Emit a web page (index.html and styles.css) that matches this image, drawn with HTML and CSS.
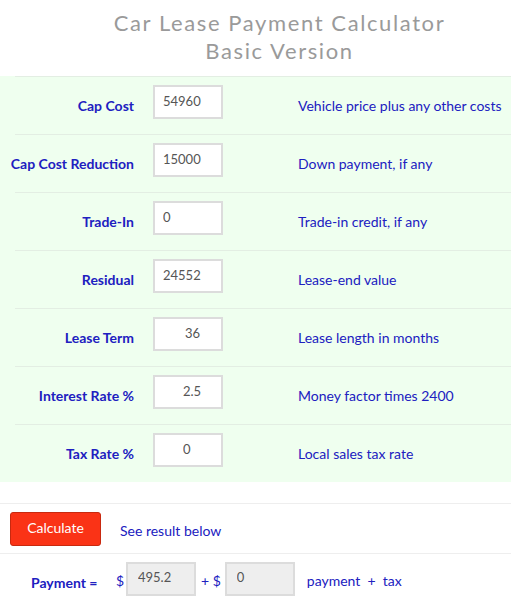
FILE: index.html
```html
<!DOCTYPE HTML>
<html>
<head>
<meta http-equiv="Content-Type" content="text/html; charset=utf-8">
<title>Car Lease Payment Calculator</title>
<link rel="stylesheet" href="styles.css">
</head>
<body>
	<h1 class="title">Car Lease Payment Calculator<br>Basic Version</h1>
	<div class="form">
		<div class="row">
			<label class="lab">Cap Cost</label>
			<input class="box" type="text" value="54960">
			<span class="desc">Vehicle price plus any other costs</span>
		</div>
		<div class="row">
			<label class="lab">Cap Cost Reduction</label>
			<input class="box" type="text" value="15000">
			<span class="desc">Down payment, if any</span>
		</div>
		<div class="row">
			<label class="lab">Trade-In</label>
			<input class="box" type="text" value="0">
			<span class="desc">Trade-in credit, if any</span>
		</div>
		<div class="row">
			<label class="lab">Residual</label>
			<input class="box" type="text" value="24552">
			<span class="desc">Lease-end value</span>
		</div>
		<div class="row">
			<label class="lab">Lease Term</label>
			<input class="box far" type="text" value="36">
			<span class="desc">Lease length in months</span>
		</div>
		<div class="row">
			<label class="lab">Interest Rate %</label>
			<input class="box mid" type="text" value="2.5">
			<span class="desc">Money factor times 2400</span>
		</div>
		<div class="row">
			<label class="lab">Tax Rate %</label>
			<input class="box mid" type="text" value="0">
			<span class="desc">Local sales tax rate</span>
		</div>
	</div>
	<div class="calc">
		<button class="btn" type="button">Calculate</button>
		<span class="hint">See result below</span>
	</div>
	<div class="result">
		<span class="paylab">Payment =</span>
		<span class="dollar">$</span>
		<input class="box out" type="text" value="495.2" readonly>
		<span class="plus">+ $</span>
		<input class="box out" type="text" value="0" readonly>
		<span class="note">payment&nbsp; +&nbsp; tax</span>
	</div>
</body>
</html>
```

FILE: styles.css
```css
/* 页面基础 */
body {
	margin: 0;
	font-family: Lato, "Open Sans", sans-serif;
	color: #2020c0;
	background: #fff;
}

.title {
	margin: 0;
	padding: 9px 0 11px 48px;
	font-size: 22px;
	line-height: 28px;
	font-weight: normal;
	letter-spacing: 1.6px;
	color: #9a9a9a;
	text-align: center;
}

/* 输入区 绿色背景 */
.form {
	background: #efffef;
}

.row {
	display: flex;
	align-items: center;
	height: 57px;
	margin-left: 15px;
	border-top: 1px solid #e3eee3;
	font-size: 14px;
}

.lab {
	margin-left: -15px;
	width: 134px;
	display: flex;
	justify-content: flex-end;
	white-space: nowrap;
	font-weight: bold;
}

.box {
	box-sizing: border-box;
	width: 70px;
	height: 34px;
	border: 2px solid #dcdcdc;
	padding: 0 8px 2px;
	font: 13px Lato, sans-serif;
	color: #555;
	background: #fff;
	outline: none;
}

.row .box {
	margin: 0 0 15px 19px;
	align-self: flex-end;
}

.row .mid {
	padding-left: 28px;
}

.row .far {
	padding-left: 30px;
}

.desc {
	margin-left: 75px;
	white-space: nowrap;
}

/* 计算按钮 */
.calc {
	display: flex;
	align-items: center;
	margin-top: 21px;
	height: 49px;
	border-top: 1px solid #eee;
	border-bottom: 1px solid #eee;
	padding-left: 10px;
	font-size: 14px;
}

.btn {
	width: 91px;
	height: 34px;
	background: #fa3316;
	border: 1px solid #c8290f;
	border-radius: 3px;
	color: #fff;
	font: 14px Lato, sans-serif;
	padding: 0 0 3px;
}

.hint {
	margin: 3px 0 0 19px;
}

/* 结果 */
.result {
	display: flex;
	align-items: center;
	padding: 8px 0 0 31px;
	height: 34px;
	font-size: 14px;
}

.paylab {
	font-weight: bold;
	margin-top: 7px;
	width: 85px;
}

.dollar {
	margin-top: 3px;
	width: 10px;
}

.result .out {
	background: #eee;
	padding: 0 10px 4px;
}

.plus {
	margin: 3px 4px 0 5px;
}

.note {
	margin: 3px 0 0 12px;
}
```
